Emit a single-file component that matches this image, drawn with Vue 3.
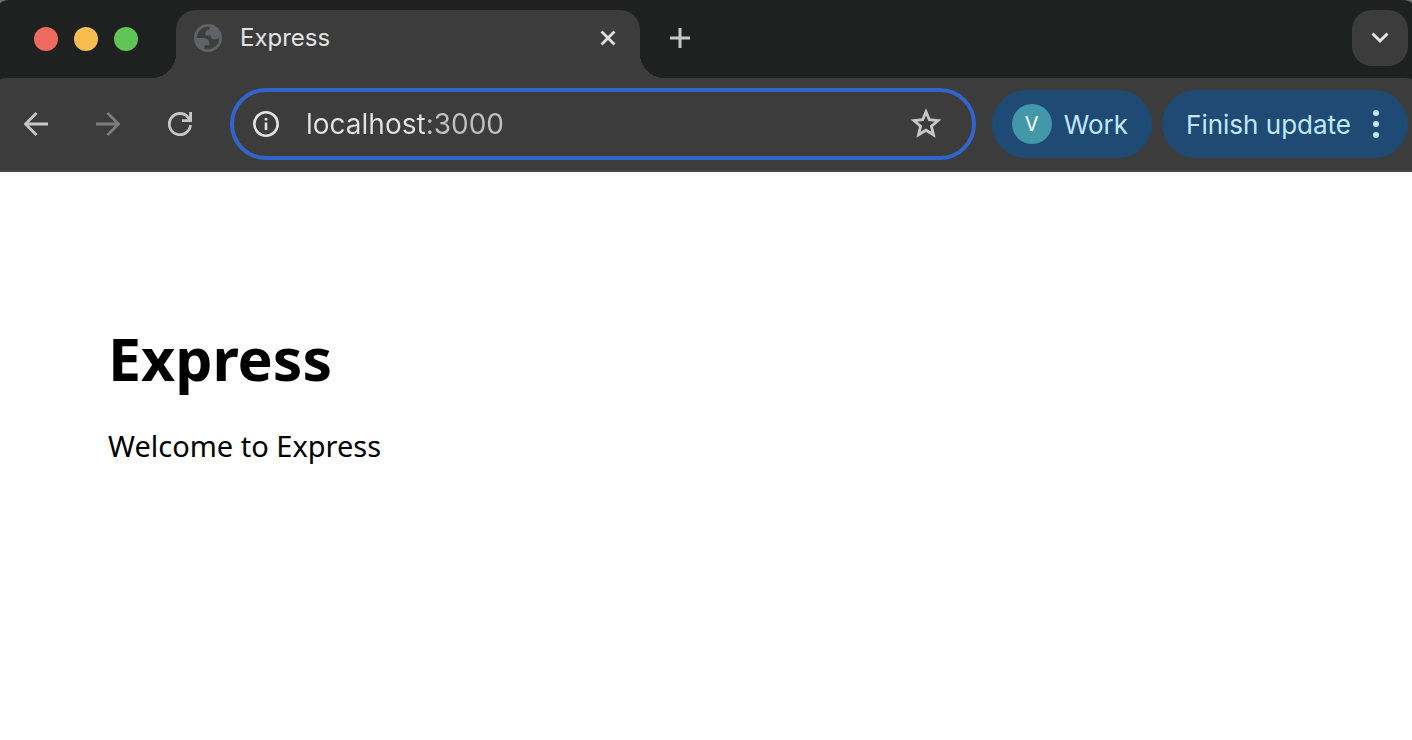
<script setup>
import { ref } from 'vue';
const title = ref('Express');
const url = ref('localhost:3000');
</script>

<template>
  <div class="browser">
    <div class="frame">
      <header class="tab-bar">
        <div class="lights">
          <span class="light red"></span>
          <span class="light yellow"></span>
          <span class="light green"></span>
        </div>
        <div class="tab">
          <!-- globe -->
          <svg class="favicon" viewBox="2 2 20 20" width="28" height="28">
            <path
              d="M12 2C6.480 2 2 6.480 2 12s4.480 10 10 10 10-4.480 10-10S17.520 2 12 2zM4 12h4.400c3.407.022 4.922 1.730 4.543 5.127H9.488v2.470a8.004 8.004 0 0 0 10.498-8.083C19.327 12.504 18.332 13 17 13c-2.137 0-3.210-.916-3.210-2.750h-3.748c-.274-2.728.683-4.092 2.870-4.092 0-.975.327-1.597.811-1.970A8.004 8.004 0 0 0 4 12z"
              fill="#5f6368"
              fill-rule="evenodd"
            />
          </svg>
          <span class="tab-title">{{ title }}</span>
          <button class="btn close" aria-label="Close tab">
            <svg viewBox="0 0 16 16" width="16" height="16">
              <path d="M1.500 1.500L14.500 14.500M14.500 1.500L1.500 14.500" stroke="#e3e3e3" stroke-width="2.800" />
            </svg>
          </button>
        </div>
        <button class="btn new-tab" aria-label="New tab">
          <svg viewBox="0 0 20 20" width="20" height="20">
            <path d="M10 0V20M0 10H20" stroke="#c7c7c7" stroke-width="3" />
          </svg>
        </button>
        <button class="btn tab-search" aria-label="Search tabs">
          <svg viewBox="0 0 18 12" width="18" height="12">
            <path d="M1.500 1.500L9 9L16.500 1.500" fill="none" stroke="#e3e3e3" stroke-width="3" />
          </svg>
        </button>
      </header>

      <nav class="toolbar">
        <button class="btn nav-btn" aria-label="Back">
          <svg viewBox="0 0 24 24" width="24" height="24">
            <path d="M24 12H2M12.500 1L1.500 12L12.500 23" fill="none" stroke="#c7c7c7" stroke-width="2.800" />
          </svg>
        </button>
        <button class="btn nav-btn" aria-label="Forward">
          <svg viewBox="0 0 24 24" width="24" height="24">
            <path d="M0 12H22M11.500 1L22.500 12L11.500 23" fill="none" stroke="#7c7c7c" stroke-width="2.800" />
          </svg>
        </button>
        <button class="btn nav-btn" aria-label="Reload">
          <svg viewBox="0 0 24 24" width="24" height="24">
            <path d="M22.500 13A10.600 10.600 0 1 1 20 5.200L22 8" fill="none" stroke="#c7c7c7" stroke-width="2.800" />
            <path d="M22.600 0V8.600H14" fill="none" stroke="#c7c7c7" stroke-width="2.800" />
          </svg>
        </button>

        <div class="address">
          <svg viewBox="0 0 28 28" width="28" height="28">
            <circle cx="14" cy="14" r="11.700" fill="none" stroke="#e3e3e3" stroke-width="2.600" />
            <path d="M14 12.500V20M14 8V10.600" stroke="#e3e3e3" stroke-width="2.600" />
          </svg>
          <input v-model="url" class="url" type="text" aria-label="Address" />
          <button class="btn star" aria-label="Bookmark this tab">
            <svg viewBox="0 0 32 32" width="32" height="32">
              <path
                d="M16 3.800L19.300 11.700L28 12.500L21.400 18.200L23.500 26.800L16 22.200L8.500 26.800L10.600 18.200L4 12.500L12.700 11.700Z"
                fill="none"
                stroke="#c7c7c7"
                stroke-width="2.800"
              />
            </svg>
          </button>
        </div>

        <button class="btn pill profile">
          <span class="avatar">V</span>
          <span class="label">Work</span>
        </button>
        <button class="btn pill update">
          <span class="label">Finish update</span>
          <svg viewBox="0 0 6 28" width="6" height="28">
            <circle cx="3" cy="3" r="3" fill="#c2e7ff" />
            <circle cx="3" cy="14" r="3" fill="#c2e7ff" />
            <circle cx="3" cy="25" r="3" fill="#c2e7ff" />
          </svg>
        </button>
      </nav>
    </div>

    <main class="page">
      <h1>{{ title }}</h1>
      <p>Welcome to {{ title }}</p>
    </main>
  </div>
</template>

<style>
body {
  margin: 0;
  background: #fff;
}
</style>

<style scoped>
.browser {
  background: #6f6f6f;
  font-family: Inter, 'Liberation Sans', sans-serif;
}
.frame {
  border-radius: 10px 10px 0 0 / 4px 4px 0 0;
  background: #1f2120;
}
.btn {
  display: flex;
  align-items: center;
  justify-content: center;
  padding: 0;
  border: none;
  background: none;
  font-family: inherit;
}
.tab-bar {
  display: flex;
  padding: 10px 4px 0 34px;
}
.lights {
  display: flex;
  gap: 16px;
  width: 142px;
  padding-top: 17px;
}
.light {
  width: 24px;
  height: 24px;
  border-radius: 50%;
}
.red {
  background: #ed6a5f;
}
.yellow {
  background: #f6be50;
}
.green {
  background: #61c555;
}
.tab {
  position: relative;
  display: flex;
  align-items: center;
  box-sizing: border-box;
  width: 464px;
  height: 68px;
  padding: 0 24px 12px 18px;
  border-radius: 20px 20px 0 0;
  background: #3c3c3c;
}
/* curved feet of the tab */
.tab::before,
.tab::after {
  content: '';
  position: absolute;
  bottom: 0;
  width: 24px;
  height: 24px;
}
.tab::before {
  left: -24px;
  background: radial-gradient(circle at 0 0, transparent 24px, #3c3c3c 24px);
}
.tab::after {
  right: -24px;
  background: radial-gradient(circle at 100% 0, transparent 24px, #3c3c3c 24px);
}
.tab-title {
  flex: 1;
  margin-left: 18px;
  color: #e3e3e3;
  font-size: 24px;
  line-height: 28px;
}
.new-tab {
  width: 56px;
  height: 56px;
  margin-left: 12px;
}
.tab-search {
  width: 56px;
  height: 56px;
  margin-left: auto;
  border-radius: 20px;
  background: #3c3c3c;
}
.toolbar {
  display: flex;
  align-items: center;
  height: 92px;
  padding-right: 4px;
  border-bottom: 2px solid #474747;
  border-radius: 8px 8px 0 0 / 2px 2px 0 0;
  background: #3c3c3c;
}
.nav-btn {
  width: 72px;
  height: 68px;
}
.address {
  display: flex;
  flex: 1;
  align-items: center;
  box-sizing: border-box;
  height: 72px;
  margin: 0 16px 0 14px;
  padding: 0 30px 0 18px;
  border: 4px solid #3164cc;
  border-radius: 36px;
}
.url {
  flex: 1;
  min-width: 0;
  margin-left: 26px;
  padding: 0;
  border: none;
  outline: none;
  /* the port is dimmer than the host */
  background: linear-gradient(to right, #e3e3e3 120px, #c0c0c0 120px);
  background-clip: text;
  -webkit-background-clip: text;
  color: transparent;
  font-family: inherit;
  font-size: 28px;
  line-height: 36px;
}
.pill {
  height: 68px;
  border-radius: 34px;
  background: #1f4a73;
  color: #c2e7ff;
  font-size: 26px;
  line-height: 32px;
  white-space: nowrap;
}
.label {
  padding-top: 2px;
}
.profile {
  gap: 12px;
  margin-right: 10px;
  padding: 0 24px 0 20px;
}
.avatar {
  width: 40px;
  border-radius: 50%;
  background: #4297a8;
  color: #fff;
  font-size: 20px;
  line-height: 40px;
}
.update {
  gap: 22px;
  padding: 0 29px 0 24px;
}
.page {
  padding: 148px 108px;
  background: #fff;
  color: #000;
  font-family: 'Noto Sans', sans-serif;
}
h1 {
  margin: 0;
  font-size: 59px;
  line-height: 76px;
}
p {
  margin: 30px 0 0;
  font-size: 29px;
  line-height: 40px;
}
</style>
